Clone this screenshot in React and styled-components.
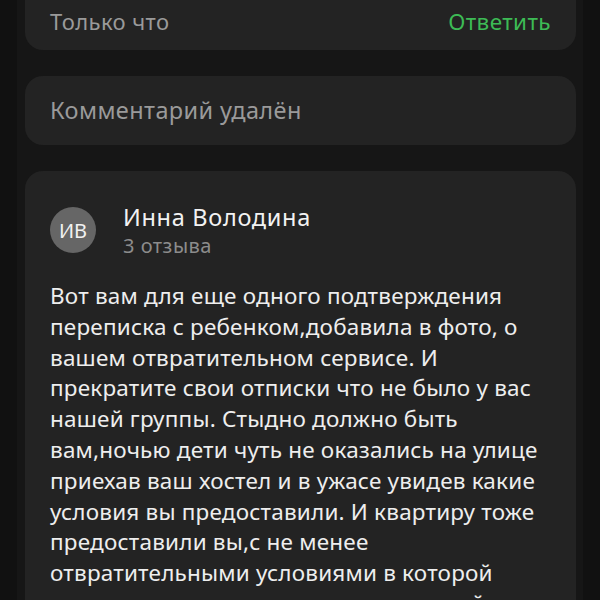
import React from "react";
import styled, { createGlobalStyle } from "styled-components";

const Global = createGlobalStyle`
  html, body { margin: 0; padding: 0; background: #111111; }
  body { font-family: "Noto Sans", "Open Sans", sans-serif; -webkit-font-smoothing: antialiased; }
`;

const Page = styled.div`
  height: 600px;
  overflow: hidden;
  margin: 0 17px;
  padding: 0 7px 0 8px;
  background: #161616;
  display: flex;
  flex-direction: column;
  gap: 26px;
`;

const Card = styled.section`
  background: #232323;
  border-radius: ${(p) => (p.$cut ? "0 0 18px 18px" : "18px")};
  padding: ${(p) => p.$pad || "20px 25px"};
  flex-shrink: 0;
`;

const FooterRow = styled.div`
  display: flex;
  justify-content: space-between;
  align-items: center;
  height: 43px;
`;

const Muted = styled.span`
  display: block;
  color: ${(p) => p.$color || "#9a9a9a"};
  font-size: ${(p) => p.$size || "22px"};
  line-height: ${(p) => p.$lh || "29px"};
  letter-spacing: ${(p) => p.$ls || "0.3px"};
`;

const Reply = styled.button`
  background: none;
  border: 0;
  padding: 0;
  font: inherit;
  font-size: 22.5px;
  letter-spacing: 0.4px;
  color: #3dbb55;
  cursor: pointer;
`;

const Header = styled.div`
  display: flex;
  align-items: center;
  gap: 27px;
`;

const Avatar = styled.div`
  width: 46px;
  height: 46px;
  border-radius: 50%;
  background: #666666;
  color: #f2f2f2;
  font-size: 20px;
  display: flex;
  align-items: center;
  justify-content: center;
  flex-shrink: 0;
`;

const Who = styled.div`
  display: flex;
  flex-direction: column;
`;

const Name = styled.div`
  color: #f2f2f2;
  font-size: 23.5px;
  letter-spacing: 0.7px;
  line-height: 32px;
`;

const Body = styled.p`
  margin: 22px 0 0;
  color: #eeeeee;
  font-size: 22.5px;
  letter-spacing: 0.2px;
  line-height: 30.8px;
`;

const text =
  "Вот вам для еще одного подтверждения переписка с ребенком,добавила в фото, о вашем отвратительном сервисе. И прекратите свои отписки что не было у вас нашей группы. Стыдно должно быть вам,ночью дети чуть не оказались на улице приехав ваш хостел и в ужасе увидев какие условия вы предоставили. И квартиру тоже предоставили вы,с не менее отвратительными условиями в которой пришлось ночевать детям а остальной";

export default function App() {
  return (
    <>
      <Global />
      <Page>
        <Card $cut $pad="0 25px 7px">
          <FooterRow>
            <Muted $ls="0.4px">Только что</Muted>
            <Reply>Ответить</Reply>
          </FooterRow>
        </Card>
        <Card>
          <Muted $size="23.5px" $ls="0.4px">Комментарий удалён</Muted>
        </Card>
        <Card $pad="30px 25px 20px">
          <Header>
            <Avatar>ИВ</Avatar>
            <Who>
              <Name>Инна Володина</Name>
              <Muted $size="20px" $lh="26px" $ls="0.5px" $color="#8c8c8c">3 отзыва</Muted>
            </Who>
          </Header>
          <Body>{text}</Body>
        </Card>
      </Page>
    </>
  );
}
